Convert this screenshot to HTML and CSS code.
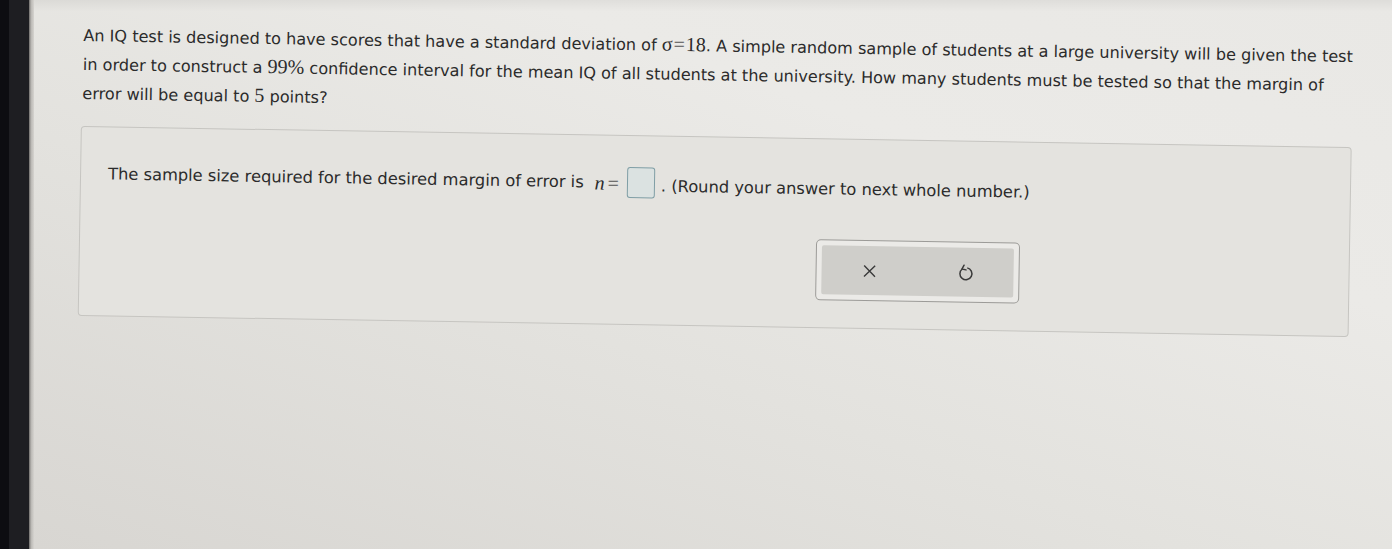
FILE: index.html
```html
<!DOCTYPE html>
<html>
<head>
<meta charset="utf-8">
<link rel="stylesheet" href="styles.css">
</head>
<body>
<div class="screen">
  <div class="bezel"><div class="bezel-inner"></div><div class="bezel-edge"></div></div>
  <div class="page">
    <div class="content">
      <p class="question">An IQ test is designed to have scores that have a standard deviation of <span class="math">σ<span class="eq">=</span>18</span>. A simple random sample of students at a large university will be given the test in order to construct a <span class="math">99%</span> confidence interval for the mean IQ of all students at the university. How many students must be tested so that the margin of error will be equal to <span class="math">5</span> points?</p>
      <div class="panel">
        <p class="answer">The sample size required for the desired margin of error is <span class="math"><i>n</i><span class="eq">=</span></span><span class="box"></span><span class="after">. (Round your answer to next whole number.)</span></p>
        <div class="tools">
          <div class="tools-inner">
            <button class="tool" aria-label="Clear">
              <svg width="16" height="16" viewBox="0 0 16 16"><path d="M2.5 2.5 L13.5 13.5 M13.5 2.5 L2.5 13.5" stroke="#3a3a3a" stroke-width="1.4" fill="none"/></svg>
            </button>
            <button class="tool" aria-label="Undo">
              <svg width="20" height="20" viewBox="0 0 20 20"><path d="M6.6 6.4 A6 6 0 1 0 11.6 5.2" stroke="#3a3a3a" stroke-width="1.5" fill="none"/><path d="M8.4 2.6 L6.3 6.5 L10.4 7.2" stroke="#3a3a3a" stroke-width="1.5" fill="none" stroke-linejoin="round" stroke-linecap="round"/></svg>
            </button>
          </div>
        </div>
      </div>
    </div>
  </div>
</div>
</body>
</html>
```
FILE: styles.css
```css
html, body {
  margin: 0;
  padding: 0;
  width: 1392px;
  height: 549px;
  overflow: hidden;
}
.screen {
  display: flex;
  width: 1392px;
  height: 549px;
}
.bezel {
  display: flex;
  flex: 0 0 34px;
  background: #0d0d11;
}
.bezel-inner {
  flex: 0 0 20px;
  margin-left: 9px;
  background: #1e1e22;
}
.bezel-edge {
  flex: 0 0 5px;
  background: linear-gradient(90deg, #6c6a68, #b9b7b3 40%, #d6d4d0);
}
.page {
  flex: 1;
  overflow: hidden;
  background:
    linear-gradient(180deg, rgba(0,0,0,0.05) 0, rgba(0,0,0,0) 12px),
    linear-gradient(200deg, #e9e8e5 0%, #ebeae7 30%, #e3e2de 60%, #d8d6d2 100%);
}
.content {
  padding: 0 0 0 49px;
  width: 1300px;
  transform: rotate(0.95deg);
  transform-origin: 49px 37px;
}
.question {
  margin: 21px 0 0;
  font-family: "DejaVu Sans", Verdana, sans-serif;
  font-size: 16.1px;
  line-height: 29px;
  color: #2b2b2b;
  width: 1285px;
}
.math {
  font-family: "Liberation Serif", "DejaVu Serif", serif;
  font-size: 20px;
  line-height: 1;
  color: #2b2b2b;
}
.math i {
  font-style: italic;
}
.eq {
  color: #555;
  margin: 0 1px;
}
.panel {
  margin-top: 18px;
  margin-left: -1px;
  width: 1271px;
  height: 190px;
  border: 1px solid #c6c5c1;
  border-radius: 4px;
  background: #e4e3df;
  box-sizing: border-box;
  padding: 31px 0 0 27px;
}
.answer {
  margin: 0;
  display: flex;
  align-items: center;
  font-family: "DejaVu Sans", Verdana, sans-serif;
  font-size: 16.3px;
  color: #2b2b2b;
  line-height: 31px;
}
.answer .math {
  margin-left: 11px;
}
.answer .eq {
  margin: 0 3px;
}
.box {
  display: inline-block;
  width: 26px;
  height: 29px;
  margin-left: 5px;
  border: 1.5px solid #7f9ea5;
  border-radius: 3px;
  background: #dbe2e1;
}
.after {
  margin-left: 6px;
  position: relative;
  top: 3px;
}
.tools {
  margin: 38px 0 0 709px;
  width: 204px;
  height: 61px;
  box-sizing: border-box;
  border: 1px solid #9c9b98;
  border-radius: 5px;
  background: #ebeae7;
  padding: 5px;
}
.tools-inner {
  display: flex;
  height: 100%;
  background: #cfceca;
  border-radius: 2px;
}
.tool {
  flex: 1;
  display: flex;
  align-items: center;
  justify-content: center;
  border: 0;
  padding: 0;
  background: transparent;
}
```
